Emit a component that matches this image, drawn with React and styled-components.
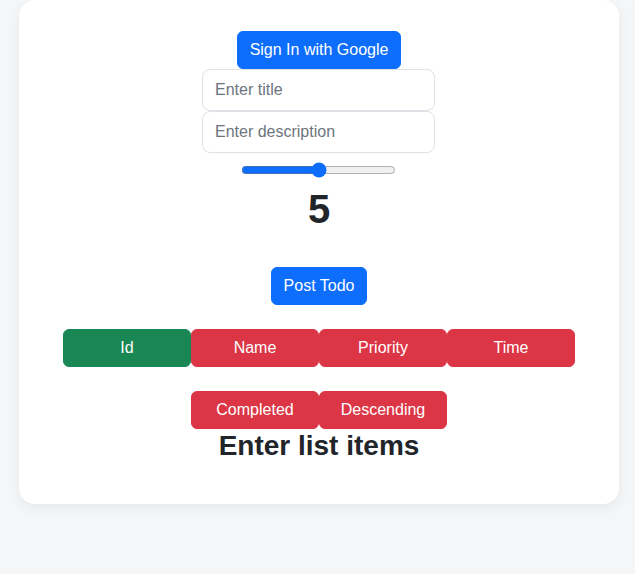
import React, { useState } from 'react'
import styled, { createGlobalStyle } from 'styled-components'

const GlobalStyle = createGlobalStyle`
  body {
    margin: 0;
    background: #f5f6f8;
    font-family: "Liberation Sans", Arial, sans-serif;
    color: #212529;
  }
`

const Page = styled.div`
  padding: 0 16px 40px 19px;
`

const Card = styled.div`
  width: 600px;
  background: #fff;
  border-radius: 16px;
  box-shadow: 0 4px 14px rgba(0, 0, 0, 0.06);
  padding: 31px 0 42px;
  display: flex;
  flex-direction: column;
  align-items: center;
`

const colors = {
  primary: '#0d6efd',
  success: '#198754',
  danger: '#dc3545',
}

const Button = styled.button`
  font-family: inherit;
  font-size: 16px;
  line-height: 24px;
  color: #fff;
  background: ${p => colors[p.$variant || 'primary']};
  border: 1px solid ${p => colors[p.$variant || 'primary']};
  border-radius: 6px;
  padding: 6px 12px;
  width: ${p => p.$width || 'auto'};
  cursor: pointer;
`

const Input = styled.input`
  width: 233px;
  height: 42px;
  box-sizing: border-box;
  border: 1px solid #dee2e6;
  border-radius: 8px;
  padding: 0 12px;
  margin-right: 1px;
  font-family: inherit;
  font-size: 16px;
  color: #212529;
  &::placeholder { color: #6c757d; }
`

const Range = styled.input`
  width: 155px;
  margin: 9px 1px 0 0;
  accent-color: #0d6efd;
`

const Value = styled.div`
  font-size: 40px;
  font-weight: bold;
  line-height: 48px;
  margin: 7px 0 34px;
`

const Row = styled.div`
  display: flex;
  justify-content: center;
  margin-top: ${p => p.$top || 0}px;
`

const Heading = styled.h2`
  margin: 1px 0 0;
  font-size: 28px;
  line-height: 32px;
  font-weight: bold;
`

export default function App() {
  const [priority, setPriority] = useState(5)
  return (
    <>
      <GlobalStyle />
      <Page>
        <Card>
          <Button>Sign In with Google</Button>
          <Input placeholder="Enter title" />
          <Input placeholder="Enter description" />
          <Range type="range" min="0" max="10" value={priority} onChange={e => setPriority(e.target.value)} />
          <Value>{priority}</Value>
          <Button>Post Todo</Button>
          <Row $top={24}>
            <Button $variant="success" $width="128px">Id</Button>
            <Button $variant="danger" $width="128px">Name</Button>
            <Button $variant="danger" $width="128px">Priority</Button>
            <Button $variant="danger" $width="128px">Time</Button>
          </Row>
          <Row $top={24}>
            <Button $variant="danger" $width="128px">Completed</Button>
            <Button $variant="danger" $width="128px">Descending</Button>
          </Row>
          <Heading>Enter list items</Heading>
        </Card>
      </Page>
    </>
  )
}
